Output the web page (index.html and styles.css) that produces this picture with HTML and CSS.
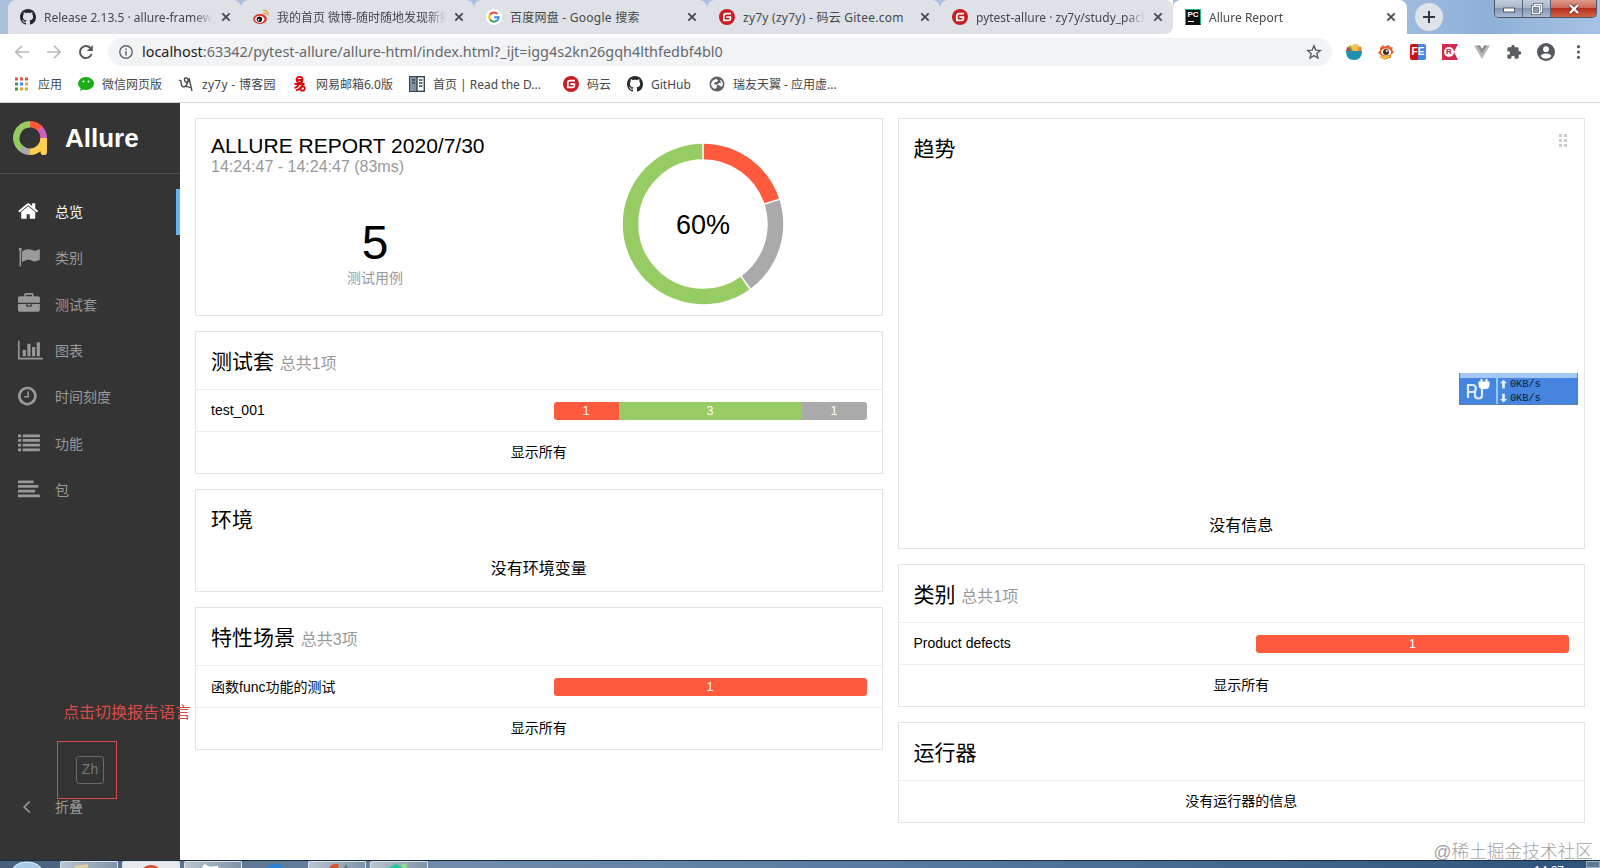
FILE: index.html
```html
<!DOCTYPE html>
<html lang="zh-CN">

<head>
  <meta charset="UTF-8" />
  <meta name="viewport" content="width=device-width, initial-scale=1.0" />
  <title>Allure Report</title>
  <link rel="stylesheet" href="styles.css">
</head>

<body>
  <!-- Shared icons -->
  <svg class="sprite" aria-hidden="true">
    <symbol id="github" viewBox="0 0 16 16">
      <path d="M8 0C3.58 0 0 3.58 0 8c0 3.54 2.29 6.53 5.47 7.59.4.07.55-.17.55-.38 0-.19-.01-.82-.01-1.49-2.01.37-2.53-.49-2.69-.94-.09-.23-.48-.94-.82-1.13-.28-.15-.68-.52-.01-.53.63-.01 1.08.58 1.23.82.72 1.21 1.87.87 2.33.66.07-.52.28-.87.51-1.07-1.78-.2-3.64-.89-3.64-3.95 0-.87.31-1.59.82-2.15-.08-.2-.36-1.02.08-2.12 0 0 .67-.21 2.2.82.64-.18 1.32-.27 2-.27s1.36.09 2 .27c1.53-1.04 2.2-.82 2.2-.82.44 1.1.16 1.92.08 2.12.51.56.82 1.27.82 2.15 0 3.07-1.87 3.75-3.65 3.95.29.25.54.73.54 1.48 0 1.07-.01 1.93-.01 2.2 0 .21.15.46.55.38A8.01 8.01 0 0 0 16 8c0-4.42-3.58-8-8-8z" fill="#24292e" />
    </symbol>
    <symbol id="gitee" viewBox="0 0 16 16">
      <circle cx="8" cy="8" r="8" fill="#c71d23" />
      <path d="M12 4.6H7.2Q4.8 4.6 4.8 7v4.4h5q1.6 0 1.6-1.6V8.2H7.4" fill="none" stroke="#fff" stroke-width="1.7" />
    </symbol>
    <symbol id="close" viewBox="0 0 10 10">
      <path d="M1.3 1.3l7.4 7.4M8.7 1.3L1.3 8.7" stroke="#45494d" stroke-width="1.8" />
    </symbol>
  </svg>

  <!-- Tab strip -->
  <div class="tab-strip">
    <div class="tab">
      <svg class="favicon"><use href="#github" /></svg>
      <span class="tab-title">Release 2.13.5 · allure-framework</span>
      <svg class="tab-close"><use href="#close" /></svg>
    </div>
    <div class="tab">
      <svg class="favicon" viewBox="0 0 16 16">
        <ellipse cx="7" cy="10" rx="6.8" ry="5" fill="#e02b2b" />
        <ellipse cx="6.6" cy="10.2" rx="4.8" ry="3.5" fill="#fff" />
        <circle cx="6.4" cy="10.3" r="2.7" fill="#111" />
        <circle cx="5.6" cy="10.8" r=".9" fill="#fff" />
        <path d="M10 1.4q5-.6 5 5M10.4 4q2.4-.2 2.2 2.2" fill="none" stroke="#f39a1f" stroke-width="1.4" />
      </svg>
      <span class="tab-title">我的首页 微博-随时随地发现新鲜事</span>
      <svg class="tab-close"><use href="#close" /></svg>
    </div>
    <div class="tab">
      <svg class="favicon" viewBox="0 0 16 16">
        <circle cx="8" cy="8" r="8" fill="#fff" />
        <g fill="none" stroke-width="2">
          <path d="M11.4 4.9A4.7 4.7 0 0 0 4 5.6" stroke="#ea4335" />
          <path d="M4 5.5a4.7 4.7 0 0 0 0 5" stroke="#fbbc05" />
          <path d="M4 10.4a4.7 4.7 0 0 0 7 1.2" stroke="#34a853" />
          <path d="M11 11.6a4.7 4.7 0 0 0 1.7-3.4H8.2" stroke="#4285f4" />
        </g>
      </svg>
      <span class="tab-title full">百度网盘 - Google 搜索</span>
      <svg class="tab-close"><use href="#close" /></svg>
    </div>
    <div class="tab">
      <svg class="favicon"><use href="#gitee" /></svg>
      <span class="tab-title full">zy7y (zy7y) - 码云 Gitee.com</span>
      <svg class="tab-close"><use href="#close" /></svg>
    </div>
    <div class="tab">
      <svg class="favicon"><use href="#gitee" /></svg>
      <span class="tab-title">pytest-allure · zy7y/study_package</span>
      <svg class="tab-close"><use href="#close" /></svg>
    </div>
    <div class="tab active">
      <div class="favicon pycharm">PC</div>
      <span class="tab-title">Allure Report</span>
      <svg class="tab-close"><use href="#close" /></svg>
    </div>
    <div class="new-tab">
      <svg viewBox="0 0 12 12"><path d="M6 0v12M0 6h12" stroke="#35393d" stroke-width="2" /></svg>
    </div>
    <div class="window-buttons">
      <div><svg viewBox="0 0 12 10"><rect x=".5" y="4" width="11" height="4" fill="#fff" stroke="#555c70" /></svg></div>
      <div>
        <svg viewBox="0 0 12 12">
          <g fill="none" stroke="#555c70" stroke-width="3"><path d="M3.5 3V1.5h7v7H9" /><rect x="1.5" y="3.5" width="7" height="7" /></g>
          <g fill="none" stroke="#fff" stroke-width="1.4"><path d="M3.5 3V1.5h7v7H9" /><rect x="1.5" y="3.5" width="7" height="7" /></g>
        </svg>
      </div>
      <div class="win-close">
        <svg viewBox="0 0 12 10"><path d="M2 1l8 8M10 1L2 9" stroke="#653535" stroke-width="4" /><path d="M2 1l8 8M10 1L2 9" stroke="#fff" stroke-width="2.4" /></svg>
      </div>
    </div>
  </div>

  <!-- Toolbar -->
  <div class="toolbar">
    <svg class="nav-icon" viewBox="0 0 16 16"><path d="M15 8H2M8 1.8L1.8 8 8 14.2" fill="none" stroke="#b9bbbe" stroke-width="1.7" /></svg>
    <svg class="nav-icon" viewBox="0 0 16 16"><path d="M1 8h13M8 1.8L14.2 8 8 14.2" fill="none" stroke="#b9bbbe" stroke-width="1.7" /></svg>
    <svg class="nav-icon" viewBox="0 0 16 16"><path d="M13.6 10A6 6 0 1 1 12.4 4" fill="none" stroke="#55595d" stroke-width="2" /><path d="M14.8 1v6H8.8z" fill="#55595d" /></svg>
    <div class="omnibox">
      <svg class="info-icon" viewBox="0 0 14 14"><circle cx="7" cy="7" r="6.2" fill="none" stroke="#5f6368" stroke-width="1.4" /><path d="M7 6.2v4.2M7 3.4v1.5" stroke="#5f6368" stroke-width="1.5" /></svg>
      <span class="url"><b>localhost</b>:63342/pytest-allure/allure-html/index.html?_ijt=igg4s2kn26gqh4lthfedbf4bl0</span>
      <svg class="star" viewBox="0 0 16 16"><path d="M8 1.8l1.8 4.3 4.6.4-3.5 3 1.1 4.5-4-2.4L4 14l1.1-4.5-3.500-3 4.600-.4z" fill="none" stroke="#5a5e62" stroke-width="1.4" /></svg>
    </div>
    <div class="extensions">
      <svg viewBox="0 0 16 16">
        <path d="M1 7.500V3.500L4 1l2 1 2-2 4 .500 1 2 3 1v4z" fill="#f2c14b" />
        <path d="M0 7.500L1 3l3 1 2 3.500z" fill="#c8443f" /><path d="M4 2l3 5H5L3 3z" fill="#5f9d57" /><path d="M12 7V3l3-.5V7z" fill="#e08a3c" />
        <path d="M0 7h16q0 9-8 9T0 7z" fill="#1f93ae" />
      </svg>
      <svg viewBox="0 0 16 16">
        <path d="M2 4l3-3 1 1.500L11 1l1 2 3 .5-1 2 2 3-3 2v3l-6 2-5-2 1-2-3-3 2-2z" fill="#e8622c" />
        <path d="M3 11q5 3 10-1l-1 3-5 2-4-1z" fill="#f5bd3c" />
        <ellipse cx="8" cy="8" rx="5" ry="3.600" fill="#fff" /><circle cx="8" cy="8" r="3" fill="#463129" /><circle cx="8.800" cy="7" r="1" fill="#fff" />
      </svg>
      <div class="ext-fe">FE</div>
      <div class="ext-r"><span>R</span></div>
      <svg viewBox="0 0 16 16"><path d="M0 1.500h6l2 3.500 2-3.500h6L8 15z" fill="#b7b9bb" /><path d="M3 1.500h3l2 3.500 2-3.500h3L8 10z" fill="#8c8f92" /></svg>
      <svg viewBox="0 0 24 24"><path d="M20.500 11H19V7c0-1.100-.900-2-2-2h-4V3.500a2.500 2.500 0 0 0-5 0V5H4c-1.100 0-2 .9-2 2v3.800h1.500a2.700 2.700 0 0 1 0 5.400H2V20c0 1.100.9 2 2 2h3.800v-1.500a2.700 2.700 0 0 1 5.400 0V22H17c1.100 0 2-.9 2-2v-4h1.500a2.500 2.500 0 0 0 0-5z" fill="#5a5e62" /></svg>
      <svg class="avatar" viewBox="0 0 18 18"><circle cx="9" cy="9" r="9" fill="#55595d" /><circle cx="9" cy="6.200" r="2.900" fill="#fff" /><path d="M3.500 13q1.200-2.600 5.500-2.600t5.500 2.600q-2 2.800-5.500 2.800T3.500 13z" fill="#fff" /></svg>
      <svg viewBox="0 0 16 16"><g fill="#5a5e62"><circle cx="8.500" cy="2.700" r="1.600" /><circle cx="8.500" cy="8" r="1.600" /><circle cx="8.500" cy="13.300" r="1.600" /></g></svg>
    </div>
  </div>

  <!-- Bookmarks -->
  <div class="bookmarks">
    <div>
      <svg viewBox="0 0 16 16"><path d="M2 1.500h3v3H2z M7 1.500h3v3H7z M12 1.500h3v3h-3z" fill="#dd5144" /><path d="M2 6.500h3v3H2z M2 11.500h3v3H2z" fill="#3c9a56" /><path d="M7 6.500h3v3H7z" fill="#4285f4" /><path d="M12 6.500h3v3h-3z M7 11.500h3v3H7z M12 11.500h3v3h-3z" fill="#e0a92e" /></svg>
      <span class="apps">应用</span>
    </div>
    <div>
      <svg viewBox="0 0 16 16"><ellipse cx="8" cy="7.500" rx="8" ry="6.500" fill="#1aad19" /><path d="M3 11l-1 4 4-2z" fill="#1aad19" /><circle cx="5.500" cy="5.500" r="1" fill="#fff" /><circle cx="10.500" cy="5.500" r="1" fill="#fff" /></svg>
      <span>微信网页版</span>
    </div>
    <div>
      <svg viewBox="0 0 16 16"><path d="M1 4l2 1q0 6 3 6 3-1 4-6 0-3-2-3T6.500 4t2 2.500L12 4M11 2l3 13M8 11q3-1 4 1" fill="none" stroke="#444" stroke-width="1.300" /></svg>
      <span class="cnblogs">zy7y - 博客园</span>
    </div>
    <div>
      <svg viewBox="0 0 16 16"><g fill="none" stroke="#e0060c" stroke-width="1.800"><circle cx="7.500" cy="3.800" r="3" /><path d="M5 4h5M2.500 8h10M6.500 8q-.5 3-4 4M11 8.500q-1 4-7 6" /><circle cx="10.500" cy="12.500" r="2.200" /></g></svg>
      <span>网易邮箱6.0版</span>
    </div>
    <div>
      <svg viewBox="0 0 16 16"><rect x=".7" y=".7" width="14.600" height="14.600" fill="#fff" stroke="#36454f" stroke-width="1.400" /><path d="M1 1h7v14H1z" fill="#8194a0" /><path d="M8 1v14" stroke="#36454f" stroke-width="1.400" /><path d="M3 4h3M3 7h3M10 4h3.500M10 7h3.500M10 10h3.500" stroke="#36454f" stroke-width="1.500" /></svg>
      <span>首页 | Read the D...</span>
    </div>
    <div><svg><use href="#gitee" /></svg><span>码云</span></div>
    <div><svg><use href="#github" /></svg><span>GitHub</span></div>
    <div>
      <svg viewBox="0 0 16 16"><circle cx="8" cy="8" r="7.500" fill="#5f6368" /><path d="M2 8q1-4 5-5l2 1-1 2H6l-1 2 3 1v2l-2 2Q2.500 12 2 8zM11 4l2 1 1 4-2 2-2-2H8l2-2h2z" fill="#fff" /></svg>
      <span>瑞友天翼 - 应用虚...</span>
    </div>
  </div>

  <!-- Allure report -->
  <div class="report">
    <div class="side-nav">
      <div class="brand">
        <svg class="logo" viewBox="0 0 34 34">
          <g fill="none" stroke-width="6.500">
            <path d="M17 3.300A13.700 13.700 0 0 1 27.500 8.200" stroke="#fd5a3e" />
            <path d="M27 7.600A13.700 13.700 0 0 1 30.700 17" stroke="#d35ebe" />
            <path d="M30.700 17A13.700 13.700 0 0 1 17 30.700" stroke="#ffd050" />
            <path d="M17 30.700A13.700 13.700 0 0 1 7.500 26.900" stroke="#aaa" />
            <path d="M8 27.300A13.700 13.700 0 0 1 17 3.300" stroke="#97cc64" />
          </g>
          <path d="M27.500 17H34v14a3 3 0 0 1-6.500 0z" fill="#ffd050" />
        </svg>
        <span>Allure</span>
      </div>
      <div class="menu">
        <div class="menu-item active">
          <svg viewBox="0 0 2048 1792"><path transform="translate(-60 0)" d="M1472 992v480q0 26-19 45t-45 19h-384v-384h-256v384h-384q-26 0-45-19t-19-45v-480q0-1 .5-3t.5-3l575-474 575 474q1 2 1 6zm223-69l-62 74q-8 9-21 11h-3q-13 0-21-7l-692-577-692 577q-12 8-24 7-13-2-21-11l-62-74q-8-10-7-23.500t11-21.500l719-599q32-26 76-26t76 26l244 204v-195q0-14 9-23t23-9h192q14 0 23 9t9 23v408l219 182q10 8 11 21.500t-7 23.500z" /></svg>
          <span>总览</span>
        </div>
        <div class="menu-item">
          <svg viewBox="0 0 2048 1792"><path d="M320 256q0 72-64 110v1266q0 13-9.500 22.500t-22.500 9.500h-64q-13 0-22.500-9.500t-9.500-22.500v-1266q-64-38-64-110 0-53 37.500-90.500t90.500-37.500 90.500 37.500 37.500 90.500zm1472 64v763q0 25-12.500 38.500t-39.500 27.500q-215 116-369 116-61 0-123.500-22t-108.500-48-115.500-48-142.500-22q-192 0-464 146-17 9-33 9-26 0-45-19t-19-45v-742q0-32 31-55 21-14 79-43 236-120 421-120 107 0 200 29t219 88q38 19 88 19 54 0 117.500-21t110-47 88-47 54.500-21q26 0 45 19t19 45z" /></svg>
          <span>类别</span>
        </div>
        <div class="menu-item">
          <svg viewBox="0 0 2048 1792"><path d="M640 256h512v-128h-512v128zm1152 640v480q0 66-47 113t-113 47h-1472q-66 0-113-47t-47-113v-480h672v160q0 26 19 45t45 19h320q26 0 45-19t19-45v-160h672zm-768 0v128h-256v-128h256zm768-480v384h-1792v-384q0-66 47-113t113-47h352v-160q0-40 28-68t68-28h576q40 0 68 28t28 68v160h352q66 0 113 47t47 113z" /></svg>
          <span>测试套</span>
        </div>
        <div class="menu-item">
          <svg viewBox="0 0 2048 1792"><path d="M0 128h128v1408h1920v128H0zM384 896h256v512H384zM768 384h256v1024H768zM1152 640h256v768H1152zM1536 256h256v1152H1536z" /></svg>
          <span>图表</span>
        </div>
        <div class="menu-item">
          <svg viewBox="0 0 2048 1792"><path d="M896 544v448q0 14-9 23t-23 9h-320q-14 0-23-9t-9-23v-64q0-14 9-23t23-9h224v-352q0-14 9-23t23-9h64q14 0 23 9t9 23zm416 352q0-148-73-273t-198-198-273-73-273 73-198 198-73 273 73 273 198 198 273 73 273-73 198-198 73-273zm224 0q0 209-103 385.500t-279.500 279.500-385.500 103-385.500-103-279.500-279.500-103-385.500 103-385.500 279.500-279.500 385.500-103 385.500 103 279.500 279.500 103 385.500z" /></svg>
          <span>时间刻度</span>
        </div>
        <div class="menu-item">
          <svg viewBox="0 0 2048 1792"><path d="M0 192h256v224H0zM384 192h1408v224H384zM0 576h256v224H0zM384 576h1408v224H384zM0 960h256v224H0zM384 960h1408v224H384zM0 1344h256v224H0zM384 1344h1408v224H384z" /></svg>
          <span>功能</span>
        </div>
        <div class="menu-item">
          <svg viewBox="0 0 2048 1792"><path d="M0 192h1280v224H0zM0 576h1664v224H0zM0 960h1408v224H0zM0 1344h1792v224H0z" /></svg>
          <span>包</span>
        </div>
      </div>
      <div class="language"><button>Zh</button></div>
      <div class="collapse">
        <svg viewBox="0 0 8 12"><path d="M6.800 .5L1.200 6l5.600 5.500" fill="none" stroke="#999" stroke-width="1.700" /></svg>
        <span>折叠</span>
      </div>
    </div>

    <div class="column">
      <div class="widget summary">
        <div class="summary-left">
          <h2>ALLURE REPORT 2020/7/30</h2>
          <div class="time">14:24:47 - 14:24:47 (83ms)</div>
          <div class="total">5</div>
          <div class="total-label">测试用例</div>
        </div>
        <div class="summary-right">
          <svg class="chart" viewBox="-81 -81 162 162">
            <g fill="none" stroke-width="15.500">
              <circle r="72.500" pathLength="100" stroke="#fd5a3e" stroke-dasharray="20 80" />
              <circle r="72.500" pathLength="100" stroke="#aaa" stroke-dasharray="20 80" stroke-dashoffset="-20" />
              <circle r="72.500" pathLength="100" stroke="#97cc64" stroke-dasharray="60 40" stroke-dashoffset="-40" />
            </g>
            <g stroke="#fff" stroke-width="1.500">
              <path d="M64 0h17" />
              <path d="M64 0h17" transform="rotate(72)" />
              <path d="M64 0h17" transform="rotate(144)" />
            </g>
          </svg>
          <span class="percent">60%</span>
        </div>
      </div>

      <div class="widget">
        <h2 class="widget-title">测试套 <small>总共1项</small></h2>
        <div class="row">
          <span>test_001</span>
          <div class="bar">
            <div class="failed" style="flex-grow: 65">1</div>
            <div class="passed" style="flex-grow: 183">3</div>
            <div class="skipped" style="flex-grow: 65">1</div>
          </div>
        </div>
        <div class="show-all">显示所有</div>
      </div>

      <div class="widget environment">
        <h2 class="widget-title">环境</h2>
        <div class="empty">没有环境变量</div>
      </div>

      <div class="widget">
        <h2 class="widget-title">特性场景 <small>总共3项</small></h2>
        <div class="row">
          <span>函数func功能的测试</span>
          <div class="bar"><div class="failed" style="flex-grow: 1">1</div></div>
        </div>
        <div class="show-all">显示所有</div>
      </div>
    </div>

    <div class="column">
      <div class="widget trend">
        <div class="trend-head">
          <h2 class="widget-title">趋势</h2>
          <svg class="handle" viewBox="0 0 9 14"><path d="M0 0h3v3H0zM5 0h3v3H5zM0 5h3v3H0zM5 5h3v3H5zM0 10h3v3H0zM5 10h3v3H5z" fill="#ccc" /></svg>
        </div>
        <div class="empty">没有信息</div>
      </div>

      <div class="widget">
        <h2 class="widget-title">类别 <small>总共1项</small></h2>
        <div class="row">
          <span>Product defects</span>
          <div class="bar"><div class="failed" style="flex-grow: 1">1</div></div>
        </div>
        <div class="show-all">显示所有</div>
      </div>

      <div class="widget">
        <h2 class="widget-title">运行器</h2>
        <div class="show-all executors">没有运行器的信息</div>
      </div>
    </div>
  </div>

  <!-- Taskbar -->
  <div class="taskbar">
    <svg class="start" viewBox="0 0 56 8"><ellipse cx="27" cy="12" rx="16" ry="11" fill="#a9cbe5" stroke="#e6f2fa" /></svg>
    <div class="task"><svg viewBox="0 0 58 7"><path d="M14 4l14-2v5H14z" fill="#d9cf9e" /></svg></div>
    <div class="task light"><svg viewBox="0 0 58 7"><circle cx="29" cy="15" r="12" fill="#d7503f" /></svg></div>
    <div class="task"><svg viewBox="0 0 58 7"><path d="M17 7l3-5 6 3 8-1 1 3z" fill="#fff" /></svg></div>
    <div class="task plain"><svg viewBox="0 0 58 7"><circle cx="29" cy="15" r="12" fill="#2684d8" /></svg></div>
    <div class="task"><svg viewBox="0 0 58 7"><path d="M20 7q4-6 11-5l-1 5z" fill="#d9552f" /><path d="M36 7l2-5 3 5z" fill="#6f7780" /></svg></div>
    <div class="task"><svg viewBox="0 0 58 7"><path d="M16 7l10-5 8 5z" fill="#24c99a" /><path d="M31 3l6-2v6h-4z" fill="#8be08c" /></svg></div>
    <div class="tray">14:27</div>
    <div class="desktop-button"></div>
  </div>

  <!-- Floating over the page -->
  <div class="netspeed">
    <svg viewBox="0 0 36 32">
      <path d="M8 25V12h4.500a3.500 3.500 0 0 1 0 7H8M15 18v4.500q0 3 3.500 3t3.500-3V15" fill="none" stroke="#dcecff" stroke-width="2.200" />
      <path d="M18.500 8.500h11v3q0 4.500-4 4.500h-3q-4 0-4-4.500zM20.500 6h2v3h-2zM25.500 6h2v3h-2z" fill="#fff" />
    </svg>
    <div class="speeds">
      <div><svg viewBox="0 0 8 10"><path d="M4 0l4 4H5.500v6h-3V4H0z" fill="#e6f3ff" /></svg>0KB/s</div>
      <div><svg viewBox="0 0 8 10"><path d="M4 10L0 6h2.500V0h3v6H8z" fill="#e6f3ff" /></svg>0KB/s</div>
    </div>
  </div>
  <div class="note-text">点击切换报告语言</div>
  <div class="note-box"></div>
  <div class="watermark">@稀土掘金技术社区</div>
</body>

</html>
```
FILE: styles.css
```css
* {
  margin: 0;
  padding: 0;
  box-sizing: border-box;
}

body {
  width: 1600px;
  height: 868px;
  overflow: hidden;
  position: relative;
  display: flex;
  flex-direction: column;
  background: #fff;
  color: #000;
  font-family: "Liberation Sans", "Noto Sans CJK SC", sans-serif;
  font-size: 14px;
}

svg {
  display: block;
  flex-shrink: 0;
}

.sprite {
  position: absolute;
  width: 0;
  height: 0;
}

/* Tab strip */
.tab-strip {
  height: 34px;
  flex-shrink: 0;
  display: flex;
  padding-left: 8px;
  background: linear-gradient(90deg, #a9bfda 0%, #a6c1e4 85%, #8fb0d6 93%, #a5c3e4 100%);
  font-family: "Noto Sans", "Noto Sans CJK SC", sans-serif;
  font-size: 12px;
  color: #45484c;
}

.tab {
  width: 233px;
  height: 34px;
  padding: 0 10px 0 12px;
  display: flex;
  align-items: center;
  background: #dee1e6;
  border-radius: 8px 8px 0 0;
  position: relative;
}

.tab:not(.active)::after {
  content: "";
  position: absolute;
  right: -1px;
  top: 8px;
  width: 1px;
  height: 19px;
  background: #85898f;
}

/* the corner under the tab next to the active one is white */
.tab:nth-child(5) {
  border-bottom-right-radius: 8px;
  box-shadow: 8px 8px 0 8px #fff;
  clip-path: inset(0);
}

.tab:nth-child(5)::after {
  display: none;
}

.tab.active {
  width: 234px;
  background: #fff;
}

.favicon {
  width: 16px;
  height: 16px;
  margin-right: 8px;
  flex-shrink: 0;
}

.pycharm {
  background: #111;
  border: 1px solid #21b68b;
  border-bottom-color: #111;
  color: #fff;
  font: bold 8px/9px "Liberation Sans", sans-serif;
  text-align: center;
}

.pycharm::after {
  content: "";
  display: block;
  width: 6px;
  height: 1px;
  margin: 2px 0 0 2px;
  background: #fff;
}

.tab-title {
  width: 170px;
  overflow: hidden;
  white-space: nowrap;
  -webkit-mask-image: linear-gradient(90deg, #000 150px, transparent 169px);
  mask-image: linear-gradient(90deg, #000 150px, transparent 169px);
}

.tab-title.full {
  letter-spacing: 0.25px;
  -webkit-mask-image: none;
  mask-image: none;
}

.tab-close {
  width: 10px;
  height: 10px;
  margin-left: 7px;
}

.new-tab {
  width: 28px;
  height: 28px;
  margin: 3px 0 0 8px;
  border-radius: 50%;
  background: #dee3ea;
  display: flex;
  align-items: center;
  justify-content: center;
}

.new-tab svg {
  width: 12px;
  height: 12px;
}

.window-buttons {
  display: flex;
  width: 103px;
  height: 18px;
  margin: 0 3px 0 auto;
  border: 1px solid #4c566a;
  border-top: 0;
  border-radius: 0 0 5px 5px;
  overflow: hidden;
}

.window-buttons div {
  width: 28px;
  border-right: 1px solid #5a6477;
  background: linear-gradient(#c3cddd 0%, #a9b6ca 45%, #8495b0 50%, #a9bcd6 100%);
  display: flex;
  align-items: center;
  justify-content: center;
}

.window-buttons svg {
  width: 12px;
  height: 12px;
}

.window-buttons .win-close {
  flex: 1;
  border-right: 0;
  background: linear-gradient(#dd9c8c 0%, #cf6a55 45%, #b8301b 50%, #cf6347 100%);
}

/* Toolbar */
.toolbar {
  height: 34px;
  flex-shrink: 0;
  display: flex;
  align-items: center;
  padding: 2px 6px 0 14px;
  gap: 16px;
}

.nav-icon {
  width: 16px;
  height: 16px;
}

.omnibox {
  flex: 1;
  height: 28px;
  margin-left: -2px;
  margin-right: -10px;
  padding: 0 10px 0 11px;
  border-radius: 14px;
  background: #f1f3f4;
  display: flex;
  align-items: center;
}

.info-icon {
  width: 14px;
  height: 14px;
  margin-right: 9px;
}

.url {
  flex: 1;
  padding-bottom: 2px;
  font-family: "Noto Sans", sans-serif;
  font-size: 14.4px;
  color: #65696d;
  white-space: nowrap;
}

.url b {
  font-weight: normal;
  color: #202124;
}

.star {
  width: 16px;
  height: 16px;
}

.extensions {
  display: flex;
  align-items: center;
  width: 256px;
}

.extensions > * {
  width: 16px;
  height: 16px;
  margin: 0 8px;
  flex-shrink: 0;
}

.extensions .avatar {
  width: 18px;
  height: 18px;
  margin: 0 7px;
}

.ext-fe {
  border-radius: 2px;
  background: linear-gradient(90deg, #cf0e12 50%, #4285e8 50%);
  color: #fff;
  font: bold 10px/16px "Liberation Sans", sans-serif;
  text-align: center;
}

.ext-r {
  background: #d52a50;
  clip-path: polygon(0 0, 100% 0, 75% 50%, 100% 100%, 0 100%);
  padding: 3px 2px;
}

.ext-r span {
  display: block;
  width: 10px;
  height: 10px;
  border-radius: 50%;
  background: #fff;
  color: #b71c3c;
  font: bold 8px/10px "Liberation Sans", sans-serif;
  text-align: center;
}

/* Bookmarks */
.bookmarks {
  height: 35px;
  flex-shrink: 0;
  padding: 0 0 2px 13px;
  display: grid;
  grid-template-columns: 65px 100px 114px 117px 154px 64px 82px 1fr;
  align-items: center;
  border-bottom: 1px solid #d5d7da;
  font-family: "Noto Sans", "Noto Sans CJK SC", sans-serif;
  font-size: 12px;
  color: #45484c;
}

.bookmarks div {
  display: flex;
  align-items: center;
  gap: 8px;
  white-space: nowrap;
}

.bookmarks svg {
  width: 16px;
  height: 16px;
}

.apps {
  margin-left: 1px;
}

.cnblogs {
  letter-spacing: 0.3px;
}

/* Report */
.report {
  flex: 1;
  display: flex;
  min-height: 0;
}

.side-nav {
  width: 180px;
  flex-shrink: 0;
  background: #343434;
  color: #999;
  display: flex;
  flex-direction: column;
}

.brand {
  height: 71px;
  padding: 0 0 1px 13px;
  border-bottom: 1px solid #515151;
  display: flex;
  align-items: center;
  color: #fff;
  font-size: 26px;
  font-weight: bold;
}

.brand span {
  padding-top: 2px;
}

.logo {
  width: 34px;
  height: 34px;
  margin-right: 18px;
}

.menu {
  padding-top: 15px;
}

.menu-item {
  height: 46.3px;
  padding-left: 18px;
  display: flex;
  align-items: center;
  border-right: 4px solid transparent;
}

.menu-item svg {
  width: 25px;
  height: 22px;
  margin: 0 12px 2px 0;
  fill: #999;
}

.menu-item span {
  padding-bottom: 2px;
}

.menu-item.active {
  color: #fff;
  border-right-color: #64b5f6;
}

.menu-item.active svg {
  fill: #fff;
}

.language {
  margin-top: auto;
  padding-left: 76px;
}

.language button {
  width: 28px;
  height: 28px;
  padding-bottom: 2px;
  display: block;
  border: 1px solid #6b6b6b;
  border-radius: 3px;
  background: transparent;
  color: #777;
  font-family: inherit;
  font-size: 14px;
}

.collapse {
  height: 46px;
  margin-bottom: 30px;
  padding-left: 23px;
  display: flex;
  align-items: center;
}

.collapse svg {
  width: 8px;
  height: 12px;
  margin-right: 24px;
}

.collapse span {
  padding-bottom: 2px;
}

.column {
  width: 687.5px;
  margin: 15px 0 0 15px;
  display: flex;
  flex-direction: column;
  gap: 15px;
}

.widget {
  flex-shrink: 0;
  border: 1px solid #e4e4e4;
  background: #fff;
}

h2 {
  font-size: 21px;
  font-weight: normal;
}

.widget-title {
  height: 57px;
  padding-left: 15px;
  line-height: 59px;
  white-space: nowrap;
}

.widget-title small {
  color: #999;
  font-size: 16px;
}

.row {
  height: 42px;
  padding: 0 15px;
  border-top: 1px solid #eee;
  display: flex;
  align-items: center;
  justify-content: space-between;
}

.row > span {
  padding-bottom: 2px;
}

.bar {
  width: 313px;
  height: 18px;
  margin-top: 1px;
  border-radius: 3px;
  overflow: hidden;
  display: flex;
  color: #fff;
  font-size: 12.5px;
  line-height: 18px;
  text-align: center;
}

.bar div {
  flex-basis: 0;
}

.failed {
  background: #fd5a3e;
}

.passed {
  background: #97cc64;
}

.skipped {
  background: #aaa;
}

.show-all {
  height: 42px;
  border-top: 1px solid #eee;
  line-height: 40px;
  text-align: center;
}

.empty {
  font-size: 16px;
  text-align: center;
}

.environment {
  height: 103px;
}

.environment .empty {
  line-height: 44px;
}

/* Summary */
.summary {
  height: 198px;
  display: flex;
}

.summary-left {
  width: 358px;
  padding: 16px 0 0 15px;
}

.summary-left h2 {
  line-height: 22px;
  white-space: nowrap;
}

.time {
  line-height: 20px;
  font-size: 16px;
  color: #999;
}

.total {
  margin-top: 38px;
  padding-right: 15px;
  font-size: 48px;
  line-height: 56px;
  text-align: center;
}

.total-label {
  padding-right: 15px;
  line-height: 14px;
  color: #999;
  text-align: center;
}

.summary-right {
  width: 298px;
  padding-top: 24px;
  display: grid;
  place-items: start center;
}

.chart {
  width: 162px;
  height: 162px;
  grid-area: 1 / 1;
  transform: rotate(-90deg);
}

.percent {
  grid-area: 1 / 1;
  font-size: 27px;
  line-height: 165px;
}

/* Trend */
.trend {
  height: 431px;
  display: flex;
  flex-direction: column;
  justify-content: space-between;
}

.trend-head {
  display: flex;
  justify-content: space-between;
}

.handle {
  width: 9px;
  height: 14px;
  margin: 15px 16px 0 0;
}

.trend .empty {
  line-height: 44px;
}

/* Taskbar */
.taskbar {
  height: 8px;
  flex-shrink: 0;
  display: flex;
  gap: 4px;
  overflow: hidden;
  border-top: 1px solid #1c2c3f;
  background: linear-gradient(90deg, #49607a, #6f8cab 28%, #54779d 60%, #2f527a 100%);
}

.start {
  width: 56px;
  height: 8px;
}

.task {
  width: 58px;
  border: 1px solid #dbe3ea;
  border-bottom: 0;
  border-radius: 2px 2px 0 0;
  background: linear-gradient(90deg, #b9c5cf, #7f93a7);
}

.task.light {
  background: #e7eaec;
}

.task.plain {
  border: 0;
  background: none;
}

.tray {
  margin-left: auto;
  margin-right: 18px;
  padding-top: 4px;
  color: #fff;
  font-size: 12px;
  line-height: 12px;
}

.desktop-button {
  width: 14px;
  border: 1px solid #9eb1c3;
  background: #5f7b96;
}

/* Network speed window */
.netspeed {
  position: absolute;
  left: 1459px;
  top: 373px;
  width: 119px;
  height: 32px;
  display: flex;
  border: 1px solid #5c7fae;
  border-top: 0;
  background: linear-gradient(#a4c8f3 5px, #4585df 5px);
}

.netspeed > svg {
  width: 36px;
  height: 32px;
}

.speeds {
  padding: 4px 0 0 2px;
  border-left: 2px solid #8dcaf8;
  font-family: "Liberation Mono", monospace;
  font-size: 10.5px;
  letter-spacing: -0.2px;
  line-height: 14px;
  color: #0c2038;
}

.speeds div {
  display: flex;
  align-items: center;
  gap: 3px;
  height: 14px;
}

.speeds svg {
  width: 7px;
  height: 10px;
}

/* Annotations */
.note-text {
  position: absolute;
  left: 63px;
  top: 701px;
  line-height: 24px;
  font-size: 16px;
  color: #dc4a48;
  white-space: nowrap;
}

.note-box {
  position: absolute;
  left: 57px;
  top: 741px;
  width: 60px;
  height: 58px;
  border: 1px solid #dc4a48;
}

.watermark {
  position: absolute;
  right: 7px;
  top: 840px;
  line-height: 24px;
  font-size: 17.7px;
  font-weight: 300;
  color: #a3a3a3;
  white-space: nowrap;
}
```
